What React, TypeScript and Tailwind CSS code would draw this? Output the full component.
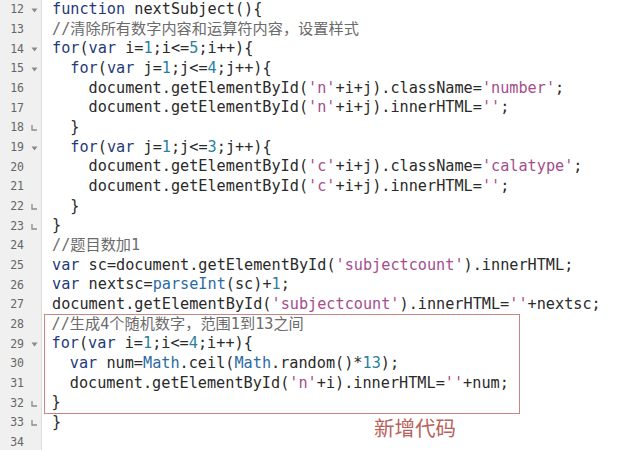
import type { ReactNode } from "react";

// Code editor screenshot: gutter with line numbers + fold markers,
// JS source with light syntax colouring, and a red annotation box.

type Fold = "open" | "end" | null;

const LINES: { n: number; fold: Fold; code: string }[] = [
  { n: 12, fold: "open", code: "function nextSubject(){" },
  { n: 13, fold: null, code: "//清除所有数字内容和运算符内容，设置样式" },
  { n: 14, fold: "open", code: "for(var i=1;i<=5;i++){" },
  { n: 15, fold: "open", code: "  for(var j=1;j<=4;j++){" },
  { n: 16, fold: null, code: "    document.getElementById('n'+i+j).className='number';" },
  { n: 17, fold: null, code: "    document.getElementById('n'+i+j).innerHTML='';" },
  { n: 18, fold: "end", code: "  }" },
  { n: 19, fold: "open", code: "  for(var j=1;j<=3;j++){" },
  { n: 20, fold: null, code: "    document.getElementById('c'+i+j).className='calatype';" },
  { n: 21, fold: null, code: "    document.getElementById('c'+i+j).innerHTML='';" },
  { n: 22, fold: "end", code: "  }" },
  { n: 23, fold: "end", code: "}" },
  { n: 24, fold: null, code: "//题目数加1" },
  { n: 25, fold: null, code: "var sc=document.getElementById('subjectcount').innerHTML;" },
  { n: 26, fold: null, code: "var nextsc=parseInt(sc)+1;" },
  { n: 27, fold: null, code: "document.getElementById('subjectcount').innerHTML=''+nextsc;" },
  { n: 28, fold: null, code: "//生成4个随机数字，范围1到13之间" },
  { n: 29, fold: "open", code: "for(var i=1;i<=4;i++){" },
  { n: 30, fold: null, code: "  var num=Math.ceil(Math.random()*13);" },
  { n: 31, fold: null, code: "  document.getElementById('n'+i).innerHTML=''+num;" },
  { n: 32, fold: "end", code: "}" },
  { n: 33, fold: "end", code: "}" },
  { n: 34, fold: null, code: "" },
];

const KEYWORDS = new Set(["function", "for", "var"]);
const BUILTINS = new Set(["Math", "parseInt"]);

function highlight(code: string): ReactNode[] {
  const out: ReactNode[] = [];
  const re = /(\/\/.*$)|('[^']*')|(\b\d+\b)|([A-Za-z_]\w*)|([^A-Za-z_\d']+)/g;
  let m: RegExpExecArray | null;
  let k = 0;
  while ((m = re.exec(code))) {
    const [t, comment, str, num, word] = m;
    let cls = "";
    if (comment) cls = "text-[#6b6b6b]";
    else if (str) cls = "text-[#a54d8c]";
    else if (num) cls = "text-[#2a7f9e]";
    else if (word && KEYWORDS.has(word)) cls = "text-[#1f3a7a]";
    else if (word && BUILTINS.has(word)) cls = "text-[#2b6aa3]";
    out.push(
      cls ? (
        <span key={k++} className={cls}>
          {t}
        </span>
      ) : (
        t
      )
    );
  }
  return out;
}

function FoldMark({ fold }: { fold: Fold }) {
  if (fold === "open")
    return (
      <svg width="7" height="5" viewBox="0 0 7 5" className="mt-px">
        <path d="M0.5 0.5 H6.5 L3.5 4.5 Z" fill="#8a8a8a" />
      </svg>
    );
  if (fold === "end")
    return (
      <svg width="7" height="6" viewBox="0 0 7 6" className="mt-px">
        <path d="M1 0 V5 H6" stroke="#8a8a8a" strokeWidth="1.3" fill="none" />
      </svg>
    );
  return null;
}

function CodeLine({ code }: { code: string }) {
  return (
    <div className="h-[19.68px] whitespace-pre pl-2">{highlight(code)}</div>
  );
}

export default function App() {
  const before = LINES.filter((l) => l.n < 28);
  const boxed = LINES.filter((l) => l.n >= 28 && l.n <= 32);
  const after = LINES.filter((l) => l.n > 32);

  return (
    <div className="relative flex min-h-[450px] w-[640px] overflow-hidden bg-white">
      {/* gutter */}
      <div className="w-[42px] shrink-0 border-r border-[#dcdcdc] bg-[#f0f0f0] font-['DejaVu_Sans_Mono',monospace] text-[11.5px] text-[#666]">
        {LINES.map((l) => (
          <div key={l.n} className="flex h-[19.68px] items-center">
            <span className="w-[24px] text-right">{l.n}</span>
            <span className="ml-[6px] flex w-[8px] justify-center">
              <FoldMark fold={l.fold} />
            </span>
          </div>
        ))}
      </div>

      {/* code */}
      <div className="ml-[2px] flex-1 font-['DejaVu_Sans_Mono','Noto_Sans_CJK_SC',monospace] text-[15.2px] leading-[19.68px] text-[#2a2a2a]">
        {before.map((l) => (
          <CodeLine key={l.n} code={l.code} />
        ))}
        <div className="-my-px w-[476px] border-[1.5px] border-[#c98484] [&>div]:pl-[6.5px]">
          {boxed.map((l) => (
            <CodeLine key={l.n} code={l.code} />
          ))}
        </div>
        {after.map((l) => (
          <CodeLine key={l.n} code={l.code} />
        ))}
      </div>

      {/* annotation */}
      <span className="absolute left-[374px] top-[413px] font-['Noto_Sans_CJK_SC',sans-serif] text-[20.5px] leading-[28px] text-[#b8625b]">
        新增代码
      </span>
    </div>
  );
}
